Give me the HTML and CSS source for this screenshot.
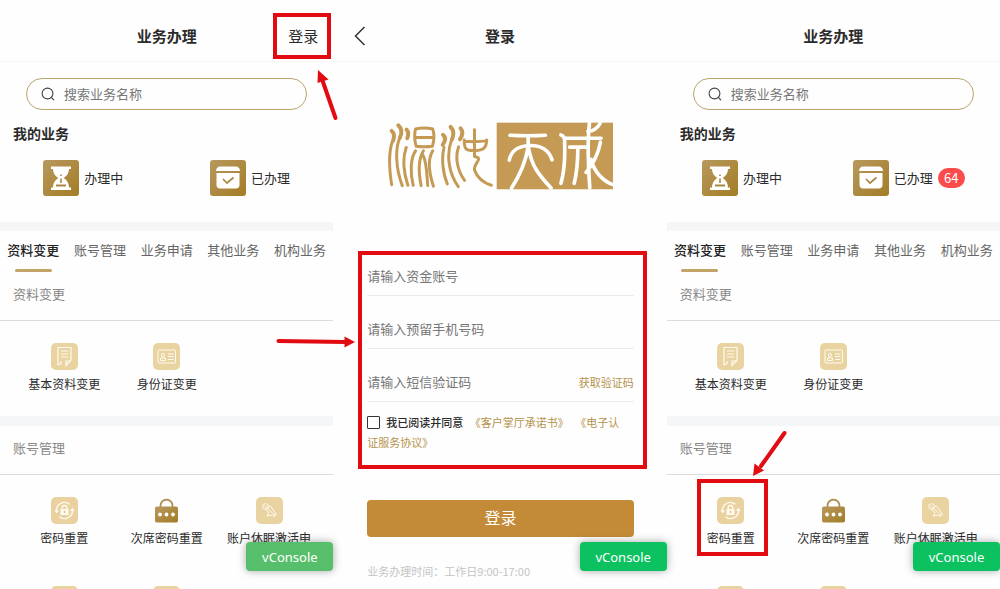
FILE: index.html
```html
<!DOCTYPE html>
<html lang="zh-CN">
<head>
<meta charset="utf-8">
<meta name="viewport" content="width=device-width, initial-scale=1">
<title>业务办理</title>
<link rel="stylesheet" href="styles.css">
</head>
<body>
<svg class="defs" aria-hidden="true">
  <defs>
    <linearGradient id="gold" x1="0" y1="0" x2="1" y2="1"><stop offset="0" stop-color="#b8995e"/><stop offset="1" stop-color="#a37c25"/></linearGradient>
    <symbol id="i-search" viewBox="0 0 14 14"><circle cx="6.5" cy="6.5" r="5.4" fill="none" stroke="#444" stroke-width="1.1"/><path d="M10.3 10.3l2.4 2.6" stroke="#444" stroke-width="1.2" stroke-linecap="round"/></symbol>
    <symbol id="i-glass" viewBox="0 0 36 36"><rect width="36" height="36" rx="3" fill="url(#gold)"/><path d="M8 6.500h20v2.500H8zM8 27.500h20V30H8z" fill="#fff"/><path d="M10 8h16c0 5-2 8-5.500 10C24 20 26 23 26 28H10c0-5 2-8 5.500-10C12 16 10 13 10 8z" fill="#fff"/><path d="M18 14.500v1.500M18 18.500v4.500" stroke="#a98743" stroke-width="1.600"/><path d="M13 25.500h10" stroke="#a98743" stroke-width="2"/></symbol>
    <symbol id="i-done" viewBox="0 0 36 36"><rect width="36" height="36" rx="3" fill="url(#gold)"/><path d="M6 11c0-3 2-4.500 4-4.500h16c2 0 4 1.500 4 4.500z" fill="#fff"/><path d="M6.500 13h23v12c0 2-1.500 3.500-3.500 3.500H10c-2 0-3.500-1.500-3.500-3.500z" fill="#fff"/><path d="M13 19l4 4 6.500-5.500" fill="none" stroke="#aa8743" stroke-width="1.700"/></symbol>
    <symbol id="i-doc" viewBox="0 0 27 27"><rect width="27" height="27" rx="5" fill="#e9d3a0"/><g fill="none" stroke="#fffaf0" stroke-width="1.200"><path d="M7 22V4.500h13v12.500l-5 5.500V18h5M7 22l3-1.500V18M10 8h7.500M10 11h7.500M10 14h7.500"/></g></symbol>
    <symbol id="i-card" viewBox="0 0 27 27"><rect width="27" height="27" rx="5" fill="#e9d3a0"/><g fill="none" stroke="#fffaf0" stroke-width="1"><rect x="5" y="7" width="17.500" height="13" rx="1"/><circle cx="10" cy="12" r="1.600"/><path d="M7.500 17.500v-2.500h5v2.500zM15 11h5.500M15 13.500h5.500M15 16.500h5.500"/></g></symbol>
    <symbol id="i-reset" viewBox="0 0 27 27"><rect width="27" height="27" rx="5" fill="#ead2a0"/><g fill="none" stroke="#fffaf0" stroke-width="1.400"><path d="M5.500 14.500a8 8 0 0 1 13-7.200M21.500 12.500a8 8 0 0 1-13 7.200"/><path d="M11.200 12.500v-1.700a2.300 2.300 0 0 1 4.600 0v1.700"/></g><path d="M9.500 12h8v6h-8zM3.500 13l2 3.500 2.500-3zM19 14l2.500-3.500 2 3.500z" fill="#fffaf0"/><path d="M13.500 13.500v2.500" stroke="#dfc287" stroke-width="1.300"/></symbol>
    <symbol id="i-lock" viewBox="0 0 27 27"><path d="M7.500 10.500V8.600a6 6 0 0 1 12 0v1.900" fill="none" stroke="#aa8b4c" stroke-width="1.700"/><rect x="2" y="9.500" width="23" height="16" rx="1.800" fill="url(#gold)"/><g fill="#fff"><circle cx="7" cy="17.500" r="1.900"/><circle cx="13.500" cy="17.500" r="1.900"/><circle cx="20" cy="17.500" r="1.900"/></g></symbol>
    <symbol id="i-wake" viewBox="0 0 27 27"><rect width="27" height="27" rx="5" fill="#e9d3a0"/><g fill="none" stroke="#fffaf0" stroke-width="1" stroke-linejoin="round"><circle cx="9.500" cy="9.500" r="2.800"/><path d="M11.500 11l2.500-2.500 6.500 9-2-.300v2.300l-2.200-1.500-5.300 1 2-3-3-3.500z"/><path d="M8.500 9l9 8"/></g></symbol>
    <symbol id="i-plain" viewBox="0 0 27 27"><rect width="27" height="27" rx="5" fill="#e9d3a0"/></symbol>
  </defs>
</svg>

<main class="board">
  <section class="screen">
    <header class="bar">
      <h1 class="bar-title">业务办理</h1>
      <button class="bar-action marked" type="button">登录</button>
    </header>
    <label class="search"><svg class="search-icon" aria-hidden="true"><use href="#i-search"/></svg><input class="search-input" type="search" placeholder="搜索业务名称" aria-label="搜索业务名称"></label>
    <h2 class="mine-title">我的业务</h2>
    <div class="mine">
      <a class="mine-item" href="#doing"><svg class="mine-icon" aria-hidden="true"><use href="#i-glass"/></svg>办理中</a>
      <a class="mine-item" href="#done"><svg class="mine-icon" aria-hidden="true"><use href="#i-done"/></svg>已办理</a>
    </div>
    <nav class="tabs">
      <a class="tab tab-on" href="#info">资料变更</a><a class="tab" href="#account">账号管理</a><a class="tab" href="#apply">业务申请</a><a class="tab" href="#other">其他业务</a><a class="tab" href="#org">机构业务</a>
    </nav>
    <h3 class="group-title">资料变更</h3>
    <div class="grid">
      <a class="cell" href="#basic"><svg class="cell-icon" aria-hidden="true"><use href="#i-doc"/></svg>基本资料变更</a>
      <a class="cell" href="#idcard"><svg class="cell-icon" aria-hidden="true"><use href="#i-card"/></svg>身份证变更</a>
    </div>
    <h3 class="group-title group-next">账号管理</h3>
    <div class="grid">
      <a class="cell" href="#reset"><svg class="cell-icon" aria-hidden="true"><use href="#i-reset"/></svg>密码重置</a>
      <a class="cell" href="#reset2"><svg class="cell-icon" aria-hidden="true"><use href="#i-lock"/></svg>次席密码重置</a>
      <a class="cell" href="#wake"><svg class="cell-icon" aria-hidden="true"><use href="#i-wake"/></svg>账户休眠激活申</a>
      <span class="cell"><svg class="cell-icon" aria-hidden="true"><use href="#i-plain"/></svg></span>
      <span class="cell"><svg class="cell-icon" aria-hidden="true"><use href="#i-plain"/></svg></span>
    </div>
    <button class="console console-faded" type="button">vConsole</button>
    <svg class="arrow arrow-login" viewBox="0 0 24 54" aria-hidden="true"><path d="M19.500 49L7 13" stroke="#e30b12" stroke-width="4" stroke-linecap="round"/><path d="M2 1l10.500 9.500L1.500 14z" fill="#e30b12"/></svg>
  </section>

  <section class="screen">
    <header class="bar">
      <button class="back" type="button" aria-label="返回"><svg class="back-icon" viewBox="0 0 12 20" aria-hidden="true"><path d="M10.500 1L1.500 10l9 9" fill="none" stroke="#333" stroke-width="1.500"/></svg></button>
      <h1 class="bar-title">登录</h1>
    </header>
    <svg class="logo" viewBox="48 51 684 204" role="img" aria-label="混沌天成">
      <rect x="379" y="53" width="353" height="201" fill="#c59a55"/>
      <g fill="none" stroke="#c59a55" stroke-linecap="round" stroke-linejoin="round">
        <path stroke-width="12" d="M62 78Q74 88 66 108M82 61Q98 76 87 98M107 74Q116 84 109 100M217 90Q230 100 216 120M240 66Q254 80 244 104M270 70Q282 84 268 103"/>
        <path stroke-width="9" d="M64 110C54 140 54 190 62 240M87 98C72 130 74 190 94 243M106 128C94 160 98 206 111 242M220 128C212 160 216 206 230 238M243 104C226 150 234 206 263 246M264 126C252 160 262 200 282 227"/>
        <path stroke-width="9" d="M134 72Q160 66 186 72Q194 96 185 124Q160 127 136 124Q128 98 134 72zM136 98h48M134 138C118 162 118 204 127 242M158 138C142 164 143 204 151 243M156 150C168 170 168 210 171 243M186 138C170 164 176 208 188 245"/>
        <path stroke-width="9" d="M281 105C281 136 288 138 312 137C338 138 348 130 349 105M282 109Q314 112 348 108M312 74V155C342 160 308 176 312 196Q324 230 363 242"/>
      </g>
      <g fill="none" stroke="#fff" stroke-width="11" stroke-linecap="round">
        <path d="M419 91Q474 94 526 91M474 92V126C466 174 446 216 424 250M417 166C423 138 440 126 474 122C512 120 536 134 546 165M474 124C484 184 505 210 543 250"/>
        <path d="M573 90Q586 93 584 116C586 166 582 204 573 236M584 100H694M599 127h52M624 127C624 164 621 204 613 236M659 54C652 110 655 178 660 250M691 56Q676 80 654 79M692 112C686 146 668 180 649 203M664 164C672 200 700 230 730 240" />
      </g>
    </svg>
    <form class="login">
      <div class="login-box">
        <div class="field"><input class="field-input" type="text" placeholder="请输入资金账号" aria-label="资金账号"></div>
        <div class="field"><input class="field-input" type="tel" placeholder="请输入预留手机号码" aria-label="预留手机号码"></div>
        <div class="field"><input class="field-input" type="text" placeholder="请输入短信验证码" aria-label="短信验证码"><button class="code" type="button">获取验证码</button></div>
        <div class="agree"><input class="tick" id="agree" type="checkbox"><label class="agree-label" for="agree">我已阅读并同意</label> <a class="agree-link" href="#promise">《客户掌厅承诺书》</a> <a class="agree-link" href="#protocol">《电子认证服务协议》</a></div>
        <svg class="arrow arrow-form" viewBox="0 0 82 14" aria-hidden="true"><path d="M3.500 6L70 7" stroke="#e30b12" stroke-width="4" stroke-linecap="round"/><path d="M80 7L69.500 12.500v-11z" fill="#e30b12"/></svg>
      </div>
      <button class="submit" type="submit">登录</button>
      <p class="hours">业务办理时间：工作日9:00-17:00</p>
    </form>
    <button class="console" type="button">vConsole</button>
  </section>

  <section class="screen">
    <header class="bar">
      <h1 class="bar-title">业务办理</h1>
    </header>
    <label class="search"><svg class="search-icon" aria-hidden="true"><use href="#i-search"/></svg><input class="search-input" type="search" placeholder="搜索业务名称" aria-label="搜索业务名称"></label>
    <h2 class="mine-title">我的业务</h2>
    <div class="mine">
      <a class="mine-item" href="#doing"><svg class="mine-icon" aria-hidden="true"><use href="#i-glass"/></svg>办理中</a>
      <a class="mine-item" href="#done"><svg class="mine-icon" aria-hidden="true"><use href="#i-done"/></svg>已办理<span class="count">64</span></a>
    </div>
    <nav class="tabs">
      <a class="tab tab-on" href="#info">资料变更</a><a class="tab" href="#account">账号管理</a><a class="tab" href="#apply">业务申请</a><a class="tab" href="#other">其他业务</a><a class="tab" href="#org">机构业务</a>
    </nav>
    <h3 class="group-title">资料变更</h3>
    <div class="grid">
      <a class="cell" href="#basic"><svg class="cell-icon" aria-hidden="true"><use href="#i-doc"/></svg>基本资料变更</a>
      <a class="cell" href="#idcard"><svg class="cell-icon" aria-hidden="true"><use href="#i-card"/></svg>身份证变更</a>
    </div>
    <h3 class="group-title group-next">账号管理</h3>
    <div class="grid">
      <a class="cell cell-marked" href="#reset"><svg class="cell-icon" aria-hidden="true"><use href="#i-reset"/></svg>密码重置
        <svg class="arrow arrow-reset" viewBox="0 0 36 48" aria-hidden="true"><path d="M32.500 3L9 36" stroke="#e30b12" stroke-width="4" stroke-linecap="round"/><path d="M1 46l1.500-12.500L12 40.500z" fill="#e30b12"/></svg>
      </a>
      <a class="cell" href="#reset2"><svg class="cell-icon" aria-hidden="true"><use href="#i-lock"/></svg>次席密码重置</a>
      <a class="cell" href="#wake"><svg class="cell-icon" aria-hidden="true"><use href="#i-wake"/></svg>账户休眠激活申</a>
      <span class="cell"><svg class="cell-icon" aria-hidden="true"><use href="#i-plain"/></svg></span>
      <span class="cell"><svg class="cell-icon" aria-hidden="true"><use href="#i-plain"/></svg></span>
    </div>
    <button class="console" type="button">vConsole</button>
  </section>
</main>
</body>
</html>
```
FILE: styles.css
```css
* { box-sizing: border-box; }

body {
  margin: 0;
  background: #fefefe;
  color: #2b2b2b;
  font-family: "Noto Sans CJK SC", sans-serif;
  font-size: 13px;
  line-height: 20px;
}

h1, h2, h3, p { margin: 0; }
a { color: inherit; text-decoration: none; }
svg { display: block; }

button, input {
  margin: 0;
  padding: 0;
  border: 0;
  background: none;
  color: inherit;
  font: inherit;
}

input::placeholder { color: #777; opacity: 1; }

.defs { position: absolute; width: 0; height: 0; }

.board {
  display: grid;
  grid-template-rows: 100%;
  grid-template-columns: repeat(3, 1fr);
  height: 100vh;
  overflow: hidden;
}

.screen { position: relative; min-width: 0; }

/* Title bar */
.bar {
  display: grid;
  grid-template-columns: 1fr auto 1fr;
  align-items: center;
  min-height: 62px;
  padding: 13px 2px 2px;
  border-bottom: 1px solid #f6f6f6;
}

.bar-title { grid-column: 2; font-size: 15px; font-weight: 700; }
.bar-action { grid-column: 3; justify-self: end; font-size: 15px; }
.marked { height: 46px; padding: 0 9px 0 11px; border: 4px solid #e30b12; }
.back { grid-column: 1; padding-left: 19px; justify-self: start; }
.back-icon { width: 12px; height: 20px; }

/* Search */
.search {
  display: flex;
  align-items: center;
  gap: 9px;
  height: 32px;
  margin: 16px 26px 0;
  padding: 0 14px;
  border: 1px solid #b9a56c;
  border-radius: 16px;
}

.search-icon { flex: none; width: 14px; height: 14px; }
.search-input { flex: 1; min-width: 0; outline: 0; }

/* My business */
.mine-title { margin: 13px 13px 0; font-size: 14px; font-weight: 700; }

.mine {
  display: flex;
  justify-content: space-around;
  padding: 17px 0 26px;
  border-bottom: 9px solid #f6f6f7;
}

.mine-item { display: flex; align-items: center; gap: 5px; }
.mine-icon { width: 36px; height: 36px; }

.count {
  min-width: 27px;
  border-radius: 10px;
  background: #fb4b4b;
  color: #fff;
  text-align: center;
}

/* Tabs and groups */
.tabs { display: flex; padding-top: 9px; }

.tab {
  display: flex;
  flex: 1;
  flex-direction: column;
  align-items: center;
  gap: 9px;
  color: #666;
  white-space: nowrap;
}

.tab::after { width: 37px; height: 3px; border-radius: 2px; content: ""; }
.tab-on { color: #222; font-weight: 500; }
.tab-on::after { background: #c2a468; }

.group-title {
  padding: 12px 13px 16px;
  border-bottom: 1px solid #dcdcde;
  color: #888;
  font-size: 13px;
  font-weight: 400;
}

.group-next { border-top: 10px solid #f5f6f8; }

.grid {
  display: grid;
  grid-template-columns: repeat(3, 1fr);
  row-gap: 39px;
  padding: 22px 13px 23px;
}

.cell {
  position: relative;
  display: flex;
  flex-direction: column;
  align-items: center;
  gap: 5px;
  font-size: 12px;
  line-height: 18px;
  white-space: nowrap;
}

.cell-icon { width: 27px; height: 27px; }

.cell-marked::before {
  position: absolute;
  inset: -18px 14px -9px 17px;
  border: 4px solid #e30b12;
  content: "";
}

/* Login */
.logo { width: 68%; margin: 60px auto 61px; }
.login { padding: 0 20px 0 25px; }

.login-box {
  position: relative;
  display: flex;
  flex-direction: column;
  gap: 21px;
  padding: 9px 9px 13px 5px;
  border: 4px solid #e30b12;
}

.field {
  display: flex;
  height: 32px;
  padding-bottom: 7px;
  border-bottom: 1px solid #ececec;
}

.field-input { flex: 1; min-width: 0; outline: 0; }
.code { color: #b5924a; font-size: 11px; }
.agree { margin-top: -11px; padding-right: 6px; font-size: 11px; }

.tick {
  width: 13px;
  height: 13px;
  margin-right: 6px;
  border: 1px solid #333;
  border-radius: 1px;
  appearance: none;
  vertical-align: -2px;
}

.agree-label { margin-right: 4px; font-weight: 500; }
.agree-link { margin-right: 4px; color: #b5924a; }

.submit {
  display: block;
  width: calc(100% - 22px);
  height: 37px;
  margin: 31px 13px 24px 9px;
  padding-bottom: 2px;
  border-radius: 4px;
  background: #c38a38;
  color: #fff;
  font-size: 16px;
}

.hours { margin-left: 9px; color: #c4c4c4; font-size: 11px; }

/* Floating items */
.console {
  position: absolute;
  right: 0;
  bottom: 18px;
  width: 87px;
  height: 29px;
  border-radius: 4px;
  background: #0cc160;
  box-shadow: 0 0 8px rgba(0, 0, 0, 0.35);
  color: #fff;
  font-family: "Noto Sans", sans-serif;
}

.console-faded { background: #57bf6b; }

.arrow { position: absolute; z-index: 1; }
.arrow-login { top: 69px; right: -7px; width: 24px; height: 54px; }
.arrow-form { top: 80px; left: -87px; width: 82px; height: 14px; }
.arrow-reset { top: -67px; left: 72px; width: 36px; height: 48px; }
```
